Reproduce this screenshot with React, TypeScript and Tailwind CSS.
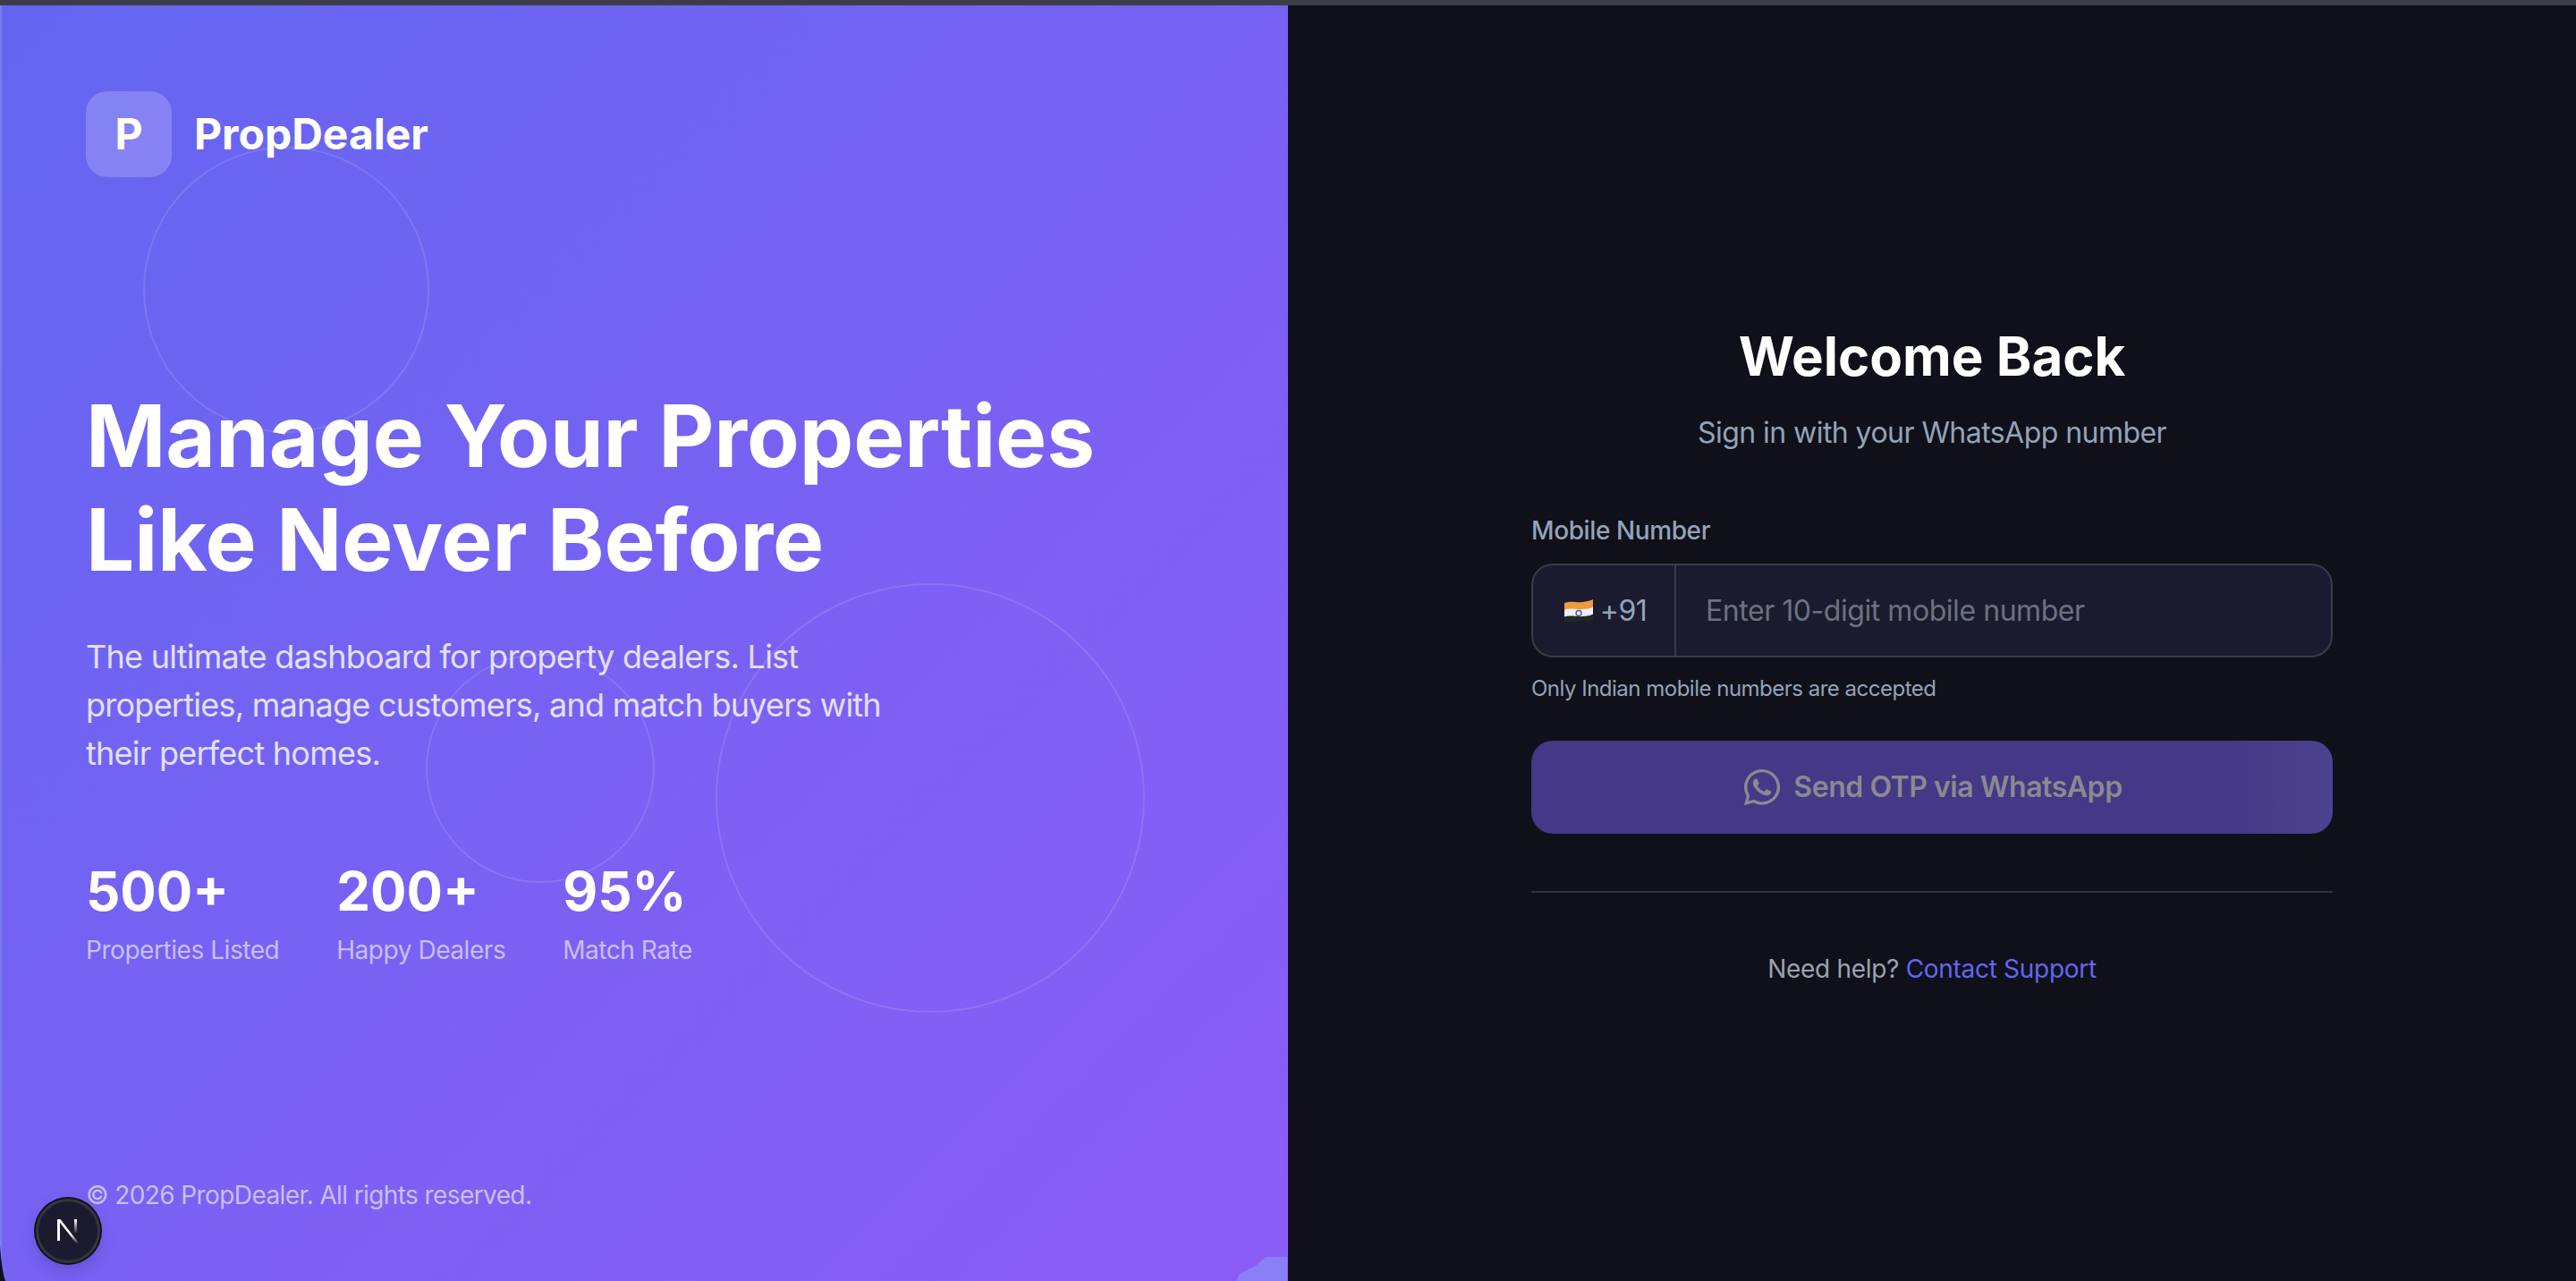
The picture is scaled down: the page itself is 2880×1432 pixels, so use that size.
import { FaWhatsapp } from "react-icons/fa";

const stats = [
  { value: "500+", label: "Properties Listed" },
  { value: "200+", label: "Happy Dealers" },
  { value: "95%", label: "Match Rate" },
];

function IndiaFlag() {
  return (
    <svg width="32" height="26" viewBox="0 0 32 26" className="shrink-0">
      <path d="M0 4C8 1 14 4 20 3C25 2.300 29 1.500 32 0V9C28 11 24 11 20 11.500C14 12.500 7 9.500 0 12Z" fill="#ee9a3d" />
      <path d="M0 11.500C7 9 14 12 20 11C25 10.500 28 10.500 32 8.500V17C28 19 24 19 20 19.500C14 20.500 7 17.500 0 20Z" fill="#eeeefc" />
      <path d="M0 19.500C7 17 14 20 20 19C25 18.500 28 18.500 32 16.500V22.500C28 24 24 24 20 24.500C14 25.500 7 23.500 0 26Z" fill="#1f2a22" />
      <circle cx="16" cy="15.500" r="3" fill="none" stroke="#4b4fb0" strokeWidth="1.300" />
    </svg>
  );
}

function NextMark() {
  return (
    <svg width="26" height="28" viewBox="0 0 26 28">
      <defs>
        <linearGradient id="nDiag" x1="0.200" y1="0.100" x2="0.900" y2="1">
          <stop offset="0.600" stopColor="#ffffff" />
          <stop offset="1" stopColor="#ffffff" stopOpacity="0.150" />
        </linearGradient>
        <linearGradient id="nStem" x1="0" y1="0" x2="0" y2="1">
          <stop offset="0" stopColor="#ffffff" />
          <stop offset="1" stopColor="#ffffff" stopOpacity="0.100" />
        </linearGradient>
      </defs>
      <rect x="1" y="1" width="3" height="24" fill="#ffffff" />
      <path d="M1 1H4.500L25 27.500L22.500 28Z" fill="url(#nDiag)" />
      <rect x="20" y="1" width="3" height="15" fill="url(#nStem)" />
    </svg>
  );
}

export default function App() {
  return (
    <div className="relative flex h-screen w-full flex-col overflow-hidden bg-[#0f1019] font-['Inter','Liberation_Sans',sans-serif]">
      <div className="h-[6px] w-full shrink-0 bg-[#3c3d47]" />
      <main className="flex h-[1447px] w-full shrink-0">
        <section className="relative flex h-full w-[1440px] shrink-0 flex-col justify-between overflow-hidden border-l-2 border-l-[#7d7bf3] bg-gradient-to-br from-[#6366f1] to-[#8b5cf6] pl-[94px] pr-24 py-24">
          <div className="absolute left-[158px] top-[158px] h-80 w-80 rounded-full border-2 border-white/[0.12]" />
          <div className="absolute left-[474px] top-[725px] h-64 w-64 rounded-full border-2 border-white/[0.12]" />
          <div className="absolute left-[798px] top-[646px] h-[480px] w-[480px] rounded-full border-2 border-white/[0.12]" />

          <div className="relative flex items-center gap-[25px]">
            <div className="flex h-24 w-24 items-center justify-center rounded-3xl bg-white/20 text-[48px] font-bold leading-none text-white">
              P
            </div>
            <span className="text-[48px] font-bold leading-none text-white">PropDealer</span>
          </div>

          <div className="relative">
            <h1 className="text-[96px] font-bold leading-[1.2] tracking-[-0.1px] text-white">
              Manage Your Properties
              <br />
              Like Never Before
            </h1>
            <p className="mt-[46px] w-[900px] text-[36px] leading-[1.5] tracking-[-0.75px] text-white/80">
              The ultimate dashboard for property dealers. List properties, manage customers, and match buyers with their perfect homes.
            </p>
            <div className="mt-[82px] flex gap-16">
              {stats.map((s) => (
                <div key={s.label} className="flex flex-col">
                  <span className="text-[60px] font-bold leading-[1.5] text-white">{s.value}</span>
                  <span className="text-[28px] leading-[1.5] tracking-[-0.45px] text-white/60">{s.label}</span>
                </div>
              ))}
            </div>
          </div>

          <div className="relative text-[28px] leading-[1.5] tracking-[-0.6px] text-white/60">© 2026 PropDealer. All rights reserved.</div>
        </section>

        <section className="flex h-full flex-1 items-center justify-center pt-[7px]">
          <div className="flex w-[896px] flex-col">
            <h2 className="text-center text-[60px] font-bold leading-[1.2] text-white">Welcome Back</h2>
            <p className="mt-[26px] text-center text-[32px] leading-[1.5] tracking-[-0.55px] text-[#94a3b8]">Sign in with your WhatsApp number</p>

            <label className="mt-16 text-[28px] font-medium leading-[1.5] tracking-[-0.4px] text-[#94a3b8]">Mobile Number</label>
            <div className="mt-4 flex h-[105px] overflow-hidden rounded-3xl border-2 border-[#3a3b47] bg-[#1a1b2e]">
              <div className="flex w-[160px] items-center justify-center gap-2 border-r-2 border-[#3a3b47] pl-1">
                <IndiaFlag />
                <span className="text-[32px] tracking-[-0.5px] text-[#94a3b8]">+91</span>
              </div>
              <div className="flex flex-1 items-center pl-[33px] text-[32px] tracking-[-0.45px] text-[#6b7280]">Enter 10-digit mobile number</div>
            </div>
            <p className="mt-[17px] text-[24px] leading-[1.5] tracking-[-0.5px] text-[#94a3b8]">Only Indian mobile numbers are accepted</p>

            <button className="relative mt-[40px] flex h-[104px] items-center justify-center gap-3 overflow-hidden rounded-3xl bg-[#443887] text-[32px] font-semibold tracking-[-0.45px] text-[#8a8a8f]">
              <span className="absolute inset-y-0 right-0 w-[120px] bg-gradient-to-r from-transparent to-white/5" />
              <FaWhatsapp size={46} />
              Send OTP via WhatsApp
            </button>

            <div className="mt-16 h-[2px] bg-[#2f3039]" />
            <p className="mt-16 text-center text-[28px] leading-[1.5] tracking-[-0.3px] text-[#9ca3af]">
              Need help? <span className="text-[#6366f1]">Contact Support</span>
            </p>
          </div>
        </section>
      </main>

      <svg className="absolute left-[1382px] top-[1403px]" width="57" height="29" viewBox="0 0 57 29">
        <path d="M0 29L4 21L22 12L33 2H57V29Z" fill="#8a7ff7" />
      </svg>
      <svg className="absolute bottom-0 left-0" width="6" height="40" viewBox="0 0 6 40">
        <path d="M0 0C1 16 3 32 6 40H0Z" fill="#0f1019" />
      </svg>
      <div className="absolute left-[40px] top-[1340px] flex h-[72px] w-[72px] items-center justify-center rounded-full border-[3px] border-[#34353f] bg-[#1a1b2e] shadow-[0_0_0_2px_#111,0_8px_16px_rgba(60,50,150,0.35)]">
        <NextMark />
      </div>
    </div>
  );
}
